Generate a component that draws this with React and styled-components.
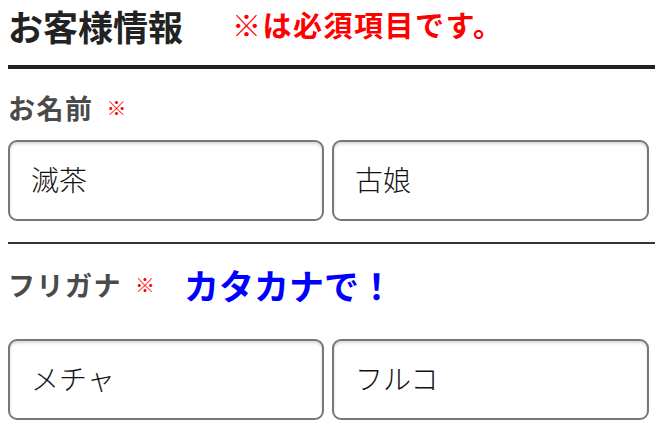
import React from "react";
import styled, { createGlobalStyle } from "styled-components";

const GlobalStyle = createGlobalStyle`
  body {
    margin: 0;
    background: #fff;
    font-family: "Noto Sans CJK JP", "Noto Sans", sans-serif;
  }
`;

const Page = styled.div`
  padding: 0 2px 0 8px;
  width: 657px;
  box-sizing: border-box;
`;

const Header = styled.div`
  display: flex;
  align-items: center;
  height: 51px;
  padding-bottom: 14px;
  border-bottom: 4px solid #222;
`;

const Title = styled.h1`
  margin: 0;
  font-size: 35px;
  line-height: 51px;
  font-weight: 700;
  color: #222;
`;

const Notice = styled.span`
  margin-left: 49px;
  margin-bottom: 4px;
  font-size: 29px;
  line-height: 42px;
  font-weight: 700;
  color: #ff0000;
  letter-spacing: 1.5px;
`;

const Section = styled.section`
  border-bottom: ${(p) => (p.$divider ? "2px solid #333" : "none")};
  padding-bottom: ${(p) => (p.$divider ? "21px" : "0")};
`;

const LabelRow = styled.div`
  display: flex;
  align-items: center;
  height: ${(p) => p.$height}px;
  margin-top: ${(p) => p.$top}px;
`;

const Label = styled.span`
  font-size: 27px;
  font-weight: 700;
  color: #4a4a4a;
  letter-spacing: 1.5px;
`;

const Required = styled.span`
  margin-left: 13px;
  font-size: 20px;
  color: #ff0000;
`;

const Hint = styled.span`
  margin-left: 29px;
  font-size: 35px;
  font-weight: 700;
  color: #0000ff;
`;

const InputRow = styled.div`
  display: flex;
  gap: 8px;
  margin-top: ${(p) => p.$top}px;
`;

const TextInput = styled.input`
  width: ${(p) => p.$width}px;
  height: 81px;
  box-sizing: border-box;
  padding: 0 0 4px 21px;
  border: 2px solid #777;
  border-radius: 9px;
  box-shadow: inset 0 2px 3px rgba(0, 0, 0, 0.15);
  font-family: "Noto Sans CJK JP", "Noto Sans", sans-serif;
  font-size: 28px;
  font-weight: 300;
  color: #111;
  background: #fff;
  outline: none;
`;

export default function App() {
  return (
    <>
      <GlobalStyle />
      <Page>
        <Header>
          <Title>お客様情報</Title>
          <Notice>※は必須項目です。</Notice>
        </Header>
        <Section $divider>
          <LabelRow $top={22} $height={32}>
            <Label>お名前</Label>
            <Required>※</Required>
          </LabelRow>
          <InputRow $top={17}>
            <TextInput $width={316} readOnly value="滅茶" />
            <TextInput $width={317} readOnly value="古娘" />
          </InputRow>
        </Section>
        <Section>
          <LabelRow $top={19} $height={42}>
            <Label>フリガナ</Label>
            <Required>※</Required>
            <Hint>カタカナで！</Hint>
          </LabelRow>
          <InputRow $top={34}>
            <TextInput $width={316} readOnly value="メチャ" />
            <TextInput $width={317} readOnly value="フルコ" />
          </InputRow>
        </Section>
      </Page>
    </>
  );
}
